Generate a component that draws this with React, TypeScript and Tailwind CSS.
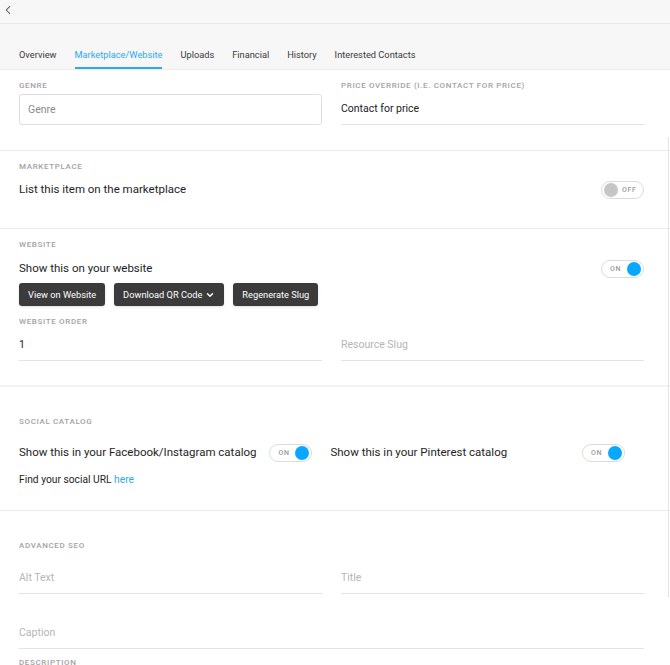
import { ChevronLeft, ChevronDown } from 'lucide-react';

const tabs = ['Overview', 'Marketplace/Website', 'Uploads', 'Financial', 'History', 'Interested Contacts'];

function Label({ children, className = '' }: { children: React.ReactNode; className?: string }) {
  return (
    <div className={`h-[12px] text-[8px] leading-[12px] font-medium uppercase tracking-[0.08em] text-[#a3a3a3] ${className}`}>
      {children}
    </div>
  );
}

function LineInput({ value, placeholder, className = '' }: { value?: string; placeholder?: string; className?: string }) {
  return (
    <div className={`flex h-[31px] items-center border-b border-[#e3e3e3] text-[10.5px] ${className}`}>
      {value ? <span className="text-[#222]">{value}</span> : <span className="text-[#b5b5b5]">{placeholder}</span>}
    </div>
  );
}

function Toggle({ on }: { on: boolean }) {
  return (
    <div className="flex h-[18px] w-[43px] items-center rounded-full border border-[#dcdcdc] bg-white px-[2px]">
      {on ? (
        <>
          <span className="flex-1 pl-[6px] text-[7px] font-medium tracking-[0.1em] text-[#9a9a9a]">ON</span>
          <span className="h-[14px] w-[14px] rounded-full bg-[#0aa7ff]" />
        </>
      ) : (
        <>
          <span className="h-[14px] w-[14px] rounded-full bg-[#c6c6c6]" />
          <span className="flex-1 pl-[4px] text-[7px] font-medium tracking-[0.1em] text-[#9a9a9a]">OFF</span>
        </>
      )}
    </div>
  );
}

function DarkButton({ children }: { children: React.ReactNode }) {
  return (
    <button className="flex h-[23px] items-center gap-[3px] rounded-[3px] bg-[#3b3b3b] px-[9px] text-[9.25px] text-white shadow-sm">
      {children}
    </button>
  );
}

export default function App() {
  return (
    <div className="relative min-h-[665px] w-[670px] overflow-hidden bg-white font-['Roboto',sans-serif] text-[#1e1e1e]">
      {/* Top bar */}
      <div className="flex h-[24px] items-center border-b border-[#e9e9e9] bg-[#f7f7f7] pb-[4px] pl-[1px]">
        <ChevronLeft size={14} strokeWidth={1.75} className="text-[#444]" />
      </div>

      {/* Tabs */}
      <div className="flex h-[46px] items-end gap-[18px] border-b border-[#ececec] bg-[#f7f7f7] px-[19px]">
        {tabs.map((tab) => (
          <div
            key={tab}
            className={`border-b-2 pb-[6px] text-[9.25px] leading-[12px] ${
              tab === 'Marketplace/Website' ? 'border-[#2aa9f4] text-[#2aa9f4]' : 'border-transparent text-[#3a3a3a]'
            }`}
          >
            {tab}
          </div>
        ))}
      </div>

      {/* Genre / price override */}
      <div className="grid grid-cols-2 gap-[19px] border-b border-[#ebebeb] pl-[19px] pr-[26px] pt-[10px] pb-[25px]">
        <div>
          <Label>Genre</Label>
          <div className="mt-[2px] flex h-[31px] items-center rounded-[3px] border border-[#dedede] px-[8px] text-[10.5px] text-[#8a8a8a]">
            Genre
          </div>
        </div>
        <div>
          <Label>Price override (i.e. contact for price)</Label>
          <LineInput className="mt-[2px]" value="Contact for price" />
        </div>
      </div>

      {/* Marketplace */}
      <div className="border-b border-[#ebebeb] pl-[19px] pr-[26px] pt-[10px] pb-[27px]">
        <Label>Marketplace</Label>
        <div className="mt-[6px] flex h-[22px] items-center justify-between text-[11.5px]">
          <span>List this item on the marketplace</span>
          <Toggle on={false} />
        </div>
      </div>

      {/* Website */}
      <div className="border-b-2 border-[#f2f2f2] pl-[19px] pr-[26px] pt-[10px] pb-[24px]">
        <Label>Website</Label>
        <div className="mt-[7px] flex h-[22px] items-center justify-between text-[11.5px]">
          <span>Show this on your website</span>
          <Toggle on />
        </div>
        <div className="mt-[3px] flex gap-[9px]">
          <DarkButton>View on Website</DarkButton>
          <DarkButton>
            Download QR Code
            <ChevronDown size={10} strokeWidth={3.5} />
          </DarkButton>
          <DarkButton>Regenerate Slug</DarkButton>
        </div>
        <Label className="mt-[10px]">Website order</Label>
        <div className="mt-[2px] grid grid-cols-2 gap-[19px]">
          <LineInput value="1" />
          <LineInput placeholder="Resource Slug" />
        </div>
      </div>

      {/* Social catalog */}
      <div className="border-b border-[#ebebeb] pl-[19px] pr-[26px] pt-[29px] pb-[22px]">
        <Label>Social catalog</Label>
        <div className="mt-[14px] flex h-[22px] items-center text-[11.5px]">
          <span>Show this in your Facebook/Instagram catalog</span>
          <div className="ml-[13px]">
            <Toggle on />
          </div>
          <span className="ml-[18px]">Show this in your Pinterest catalog</span>
          <div className="ml-auto mr-[19px]">
            <Toggle on />
          </div>
        </div>
        <div className="mt-[8px] h-[16px] text-[10.25px] leading-[16px]">
          Find your social URL <span className="text-[#2aa9f4]">here</span>
        </div>
      </div>

      {/* Advanced SEO */}
      <div className="pl-[19px] pr-[26px] pt-[29px]">
        <Label>Advanced SEO</Label>
        <div className="mt-[11px] grid grid-cols-2 gap-[19px]">
          <LineInput placeholder="Alt Text" />
          <LineInput placeholder="Title" />
        </div>
        <LineInput className="mt-[24px]" placeholder="Caption" />
        <Label className="mt-[8px]">Description</Label>
      </div>

      {/* scroll track */}
      <div className="absolute right-0 top-[137px] h-[460px] w-[2px] border-l border-[#e2e2e2]" />
    </div>
  );
}
